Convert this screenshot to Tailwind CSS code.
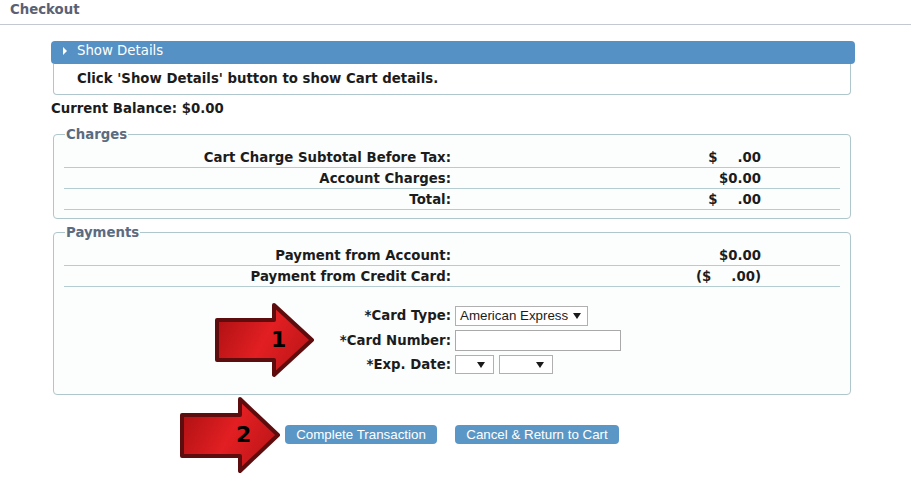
<!doctype html>
<html>
  <head>
    <meta charset="UTF-8" />
    <title>Checkout</title>
    <script src="https://cdn.jsdelivr.net/npm/@tailwindcss/browser@4"></script>
  </head>
  <body class="bg-white font-['DejaVu_Sans',sans-serif] text-[13.3px] font-bold text-[#1c1c1c] overflow-hidden">
    <header class="h-[25px] border-b border-[#c4c8d0] pl-[10px] pt-[1px] text-[#5b6174] leading-[17px]">Checkout</header>

    <main class="relative h-[465px] w-[911px] pt-[16px]">
      <!-- details -->
      <div class="ml-[51px] w-[804px]">
        <div class="flex h-[23px] items-center rounded-[4px] bg-[#5591c4] pb-[4px] pl-[11px] font-normal text-white">
          <svg width="6" height="8" viewBox="0 0 6 8" class="mr-[9px]"><path d="M1 0 L5 4 L1 8 Z" fill="#fff" /></svg>
          <span class="leading-[19px]">Show Details</span>
        </div>
        <div class="ml-[2px] flex h-[31px] w-[798px] items-center rounded-b-[4px] border border-t-0 border-[#aec6cc] pl-[23px]">
          Click 'Show Details' button to show Cart details.
        </div>
      </div>

      <p class="ml-[51px] mt-[5px] leading-[17px]">Current Balance: $0.00</p>

      <!-- charges -->
      <fieldset class="ml-[53px] mt-[10px] h-[92px] w-[798px] rounded-[4px] border border-[#aec6cc] bg-[#fcfefe] px-[10px]">
        <legend class="ml-[1px] px-[1px] leading-[15px] text-[#5b6b80]">Charges</legend>
        <div class="mt-[5px] grid grid-cols-[387px_310px] border-b border-[#b5ccd0] h-[21px] leading-[21px]">
          <span class="text-right">Cart Charge Subtotal Before Tax:</span>
          <span class="flex justify-end gap-[20px]"><span>$</span><span>.00</span></span>
        </div>
        <div class="grid grid-cols-[387px_310px] border-b border-[#b5ccd0] h-[21px] leading-[21px]">
          <span class="text-right">Account Charges:</span>
          <span class="text-right">$0.00</span>
        </div>
        <div class="grid grid-cols-[387px_310px] border-b border-[#b5ccd0] h-[21px] leading-[21px]">
          <span class="text-right">Total:</span>
          <span class="flex justify-end gap-[20px]"><span>$</span><span>.00</span></span>
        </div>
      </fieldset>

      <!-- payments -->
      <fieldset class="ml-[53px] mt-[6px] h-[170px] w-[798px] rounded-[4px] border border-[#aec6cc] bg-[#fcfefe] px-[10px]">
        <legend class="ml-[1px] px-[1px] leading-[15px] text-[#5b6b80]">Payments</legend>
        <div class="mt-[5px] grid grid-cols-[387px_310px] border-b border-[#b5ccd0] h-[21px] leading-[21px]">
          <span class="text-right">Payment from Account:</span>
          <span class="text-right">$0.00</span>
        </div>
        <div class="grid grid-cols-[387px_310px] border-b border-[#b5ccd0] h-[21px] leading-[21px]">
          <span class="text-right">Payment from Credit Card:</span>
          <span class="flex justify-end gap-[20px]"><span>($</span><span>.00)</span></span>
        </div>

        <div class="mt-[19px] grid grid-cols-[387px_auto] items-center gap-x-[4px] gap-y-[4px] font-['Liberation_Sans',sans-serif] text-[13.33px] font-normal">
          <label class="text-right font-['DejaVu_Sans',sans-serif] text-[13.3px] font-bold">*Card Type:</label>
          <div class="flex h-[20px] w-[133px] items-center justify-between whitespace-nowrap border border-[#b0b0b0] bg-white pl-[4px] pr-[6px]">
            American Express
            <svg width="8" height="6" viewBox="0 0 8 6"><path d="M0 0 H8 L4 6 Z" fill="#1a1a1a" /></svg>
          </div>
          <label class="text-right font-['DejaVu_Sans',sans-serif] text-[13.3px] font-bold">*Card Number:</label>
          <div class="h-[21px] w-[166px] border border-[#a9a9a9] bg-white"></div>
          <label class="text-right font-['DejaVu_Sans',sans-serif] text-[13.3px] font-bold">*Exp. Date:</label>
          <div class="flex gap-[5px]">
            <div class="flex h-[19px] w-[39px] items-center justify-end border border-[#b0b0b0] bg-white pr-[8px]">
              <svg width="8" height="6" viewBox="0 0 8 6"><path d="M0 0 H8 L4 6 Z" fill="#1a1a1a" /></svg>
            </div>
            <div class="flex h-[19px] w-[54px] items-center justify-end border border-[#b0b0b0] bg-white pr-[8px]">
              <svg width="8" height="6" viewBox="0 0 8 6"><path d="M0 0 H8 L4 6 Z" fill="#1a1a1a" /></svg>
            </div>
          </div>
        </div>
      </fieldset>

      <!-- actions -->
      <div class="ml-[285px] mt-[30px] flex gap-[18px] font-['Liberation_Sans',sans-serif] text-[13.33px] font-normal text-white">
        <button class="h-[19px] w-[152px] rounded-[4px] bg-[#5b97c6] leading-[19px]">Complete Transaction</button>
        <button class="h-[19px] w-[164px] rounded-[4px] bg-[#5b97c6] leading-[19px]">Cancel &amp; Return to Cart</button>
      </div>

      <!-- callout arrows sit over the form -->
      <svg class="absolute left-0 top-0 pointer-events-none" width="911" height="465" viewBox="0 25 911 465">
        <defs>
          <linearGradient id="red" x1="0" y1="0" x2="1" y2="0.4">
            <stop offset="0" stop-color="#a90f12" />
            <stop offset="0.6" stop-color="#e21f22" />
            <stop offset="1" stop-color="#c4171a" />
          </linearGradient>
        </defs>
        <path d="M217 320 H274 V305 L312 340 L274 375 V360 H217 Z" fill="url(#red)" stroke="#5e0d0e" stroke-width="4" stroke-linejoin="round" />
        <path d="M182 415 H240 V399 L278 435 L240 471 V456 H182 Z" fill="url(#red)" stroke="#5e0d0e" stroke-width="4" stroke-linejoin="round" />
      </svg>
      <span class="absolute left-[271px] top-[302px] text-[22px] leading-[26px] text-black">1</span>
      <span class="absolute left-[236px] top-[397px] text-[22px] leading-[26px] text-black">2</span>
    </main>
  </body>
</html>
